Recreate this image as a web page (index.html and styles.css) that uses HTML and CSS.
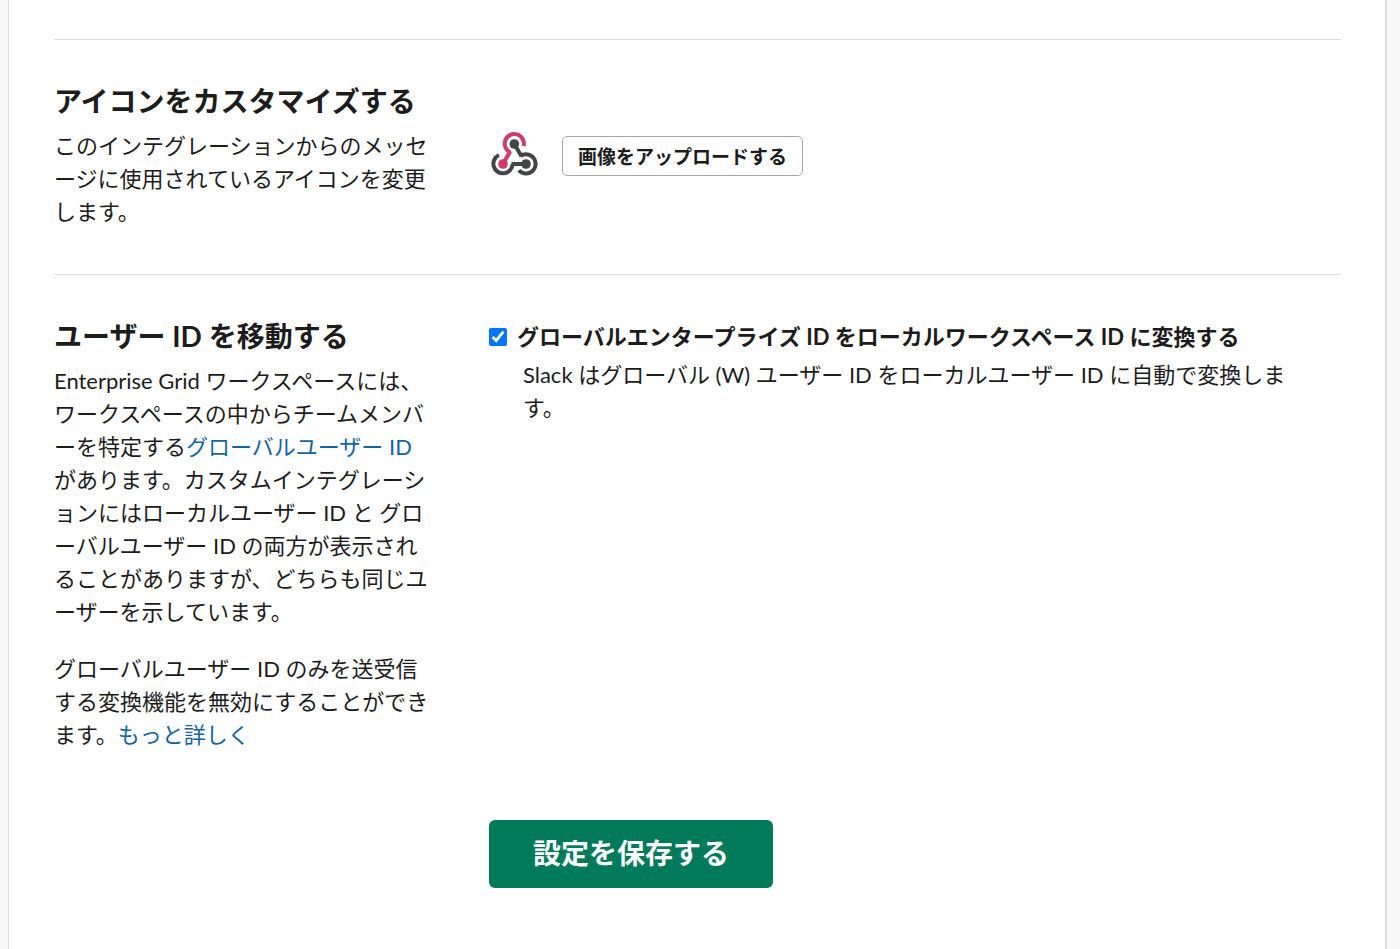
FILE: index.html
```
<!DOCTYPE html>
<html lang="ja">

<head>
    <meta charset="UTF-8">
    <meta name="viewport" content="width=device-width, initial-scale=1.0">
    <title>インテグレーションの設定</title>
    <link rel="stylesheet" href="styles.css">
</head>

<body>
    <form class="card">
        <section class="row">
            <div class="info">
                <h2>アイコンをカスタマイズする</h2>
                <p>このインテグレーションからのメッセージに使用されているアイコンを変更します。</p>
            </div>
            <div class="icon-field">
                <svg class="webhook" viewBox="0 0 48 48" fill="none" stroke-width="4" aria-hidden="true">
                    <path d="M24.300 12L31.500 24.200" stroke="#444646" />
                    <path d="M36 32H21.500" stroke="#444646" />
                    <path d="M9 23A9.600 9.600 0 1 0 22.600 32" stroke="#444646" />
                    <path d="M30.600 24A9.600 9.600 0 1 1 28.800 38.200" stroke="#444646" />
                    <path d="M13 31.700L20.200 19.500" stroke="#d13b69" />
                    <path d="M20.800 20.600A9.600 9.600 0 1 1 33.600 14" stroke="#d13b69" />
                    <circle cx="24.300" cy="12" r="4.800" fill="#444646" />
                    <circle cx="36" cy="32" r="4.800" fill="#444646" />
                    <circle cx="13" cy="32" r="4.800" fill="#d13b69" />
                </svg>
                <button type="button" class="btn-upload">画像をアップロードする</button>
            </div>
        </section>

        <section class="row">
            <div class="info">
                <h2>ユーザー ID を移動する</h2>
                <p>Enterprise Grid ワークスペースには、ワークスペースの中からチームメンバーを特定する<a href="#">グローバルユーザー ID</a> があります。カスタムインテグレーションにはローカルユーザー ID と グローバルユーザー ID の両方が表示されることがありますが、どちらも同じユーザーを示しています。</p>
                <p>グローバルユーザー ID のみを送受信する変換機能を無効にすることができます。<a href="#">もっと詳しく</a></p>
            </div>
            <div class="field">
                <div class="check">
                    <input type="checkbox" id="translate" checked>
                    <label for="translate">グローバルエンタープライズ ID をローカルワークスペース ID に変換する</label>
                </div>
                <p class="note">Slack はグローバル (W) ユーザー ID をローカルユーザー ID に自動で変換します。</p>
            </div>
        </section>

        <div class="actions">
            <button type="submit" class="btn-save">設定を保存する</button>
        </div>
    </form>
</body>

</html>
```

FILE: styles.css
```
* {
    box-sizing: border-box;
}

body {
    margin: 0;
    background-color: #f8f8f8;
    color: #1d1c1d;
    font-family: Lato, "Noto Sans CJK JP", sans-serif;
    font-size: 22px;
    line-height: 33px;
}

.card {
    min-height: 100vh;
    margin: 0 13px 0 8px;
    padding: 39px 44px 60px 45px;
    background-color: #ffffff;
    border: solid #dddddd;
    border-width: 0 2px 0 1px;
}

.row {
    display: grid;
    grid-template-columns: 380px 1fr;
    column-gap: 55px;
    padding: 43px 0 46px;
    border-top: 1px solid #dddddd;
}

h2 {
    margin: 0 0 10px;
    font-size: 28px;
    font-weight: 700;
    line-height: 36px;
}

p {
    margin: 0 0 24px;
}

.info p:last-child {
    margin-bottom: 0;
}

a {
    color: #1264a3;
    text-decoration: none;
}

.icon-field {
    display: flex;
    align-items: center;
    align-self: start;
    gap: 24px;
    padding-top: 49px;
}

.webhook {
    width: 48px;
    height: 48px;
    margin-left: 1px;
}

.field {
    padding-top: 2px;
}

button {
    font-family: inherit;
    font-weight: 700;
    cursor: pointer;
}

.btn-upload {
    height: 40px;
    padding: 0 15px 2px;
    background-color: #ffffff;
    border: 1px solid #aaaaaa;
    border-radius: 5px;
    color: #1d1c1d;
    font-size: 19px;
}

.check {
    display: flex;
    align-items: center;
    gap: 10px;
    font-weight: 700;
}

.check input {
    width: 18px;
    height: 18px;
    margin: 0;
    accent-color: #0075ff;
}

.note {
    margin: 5px 40px 0 34px;
}

.actions {
    margin-left: 435px;
    padding-top: 23px;
}

.btn-save {
    height: 68px;
    padding: 0 44px 4px;
    background-color: #007a5a;
    border: 0;
    border-radius: 6px;
    color: #ffffff;
    font-size: 28px;
}
```
